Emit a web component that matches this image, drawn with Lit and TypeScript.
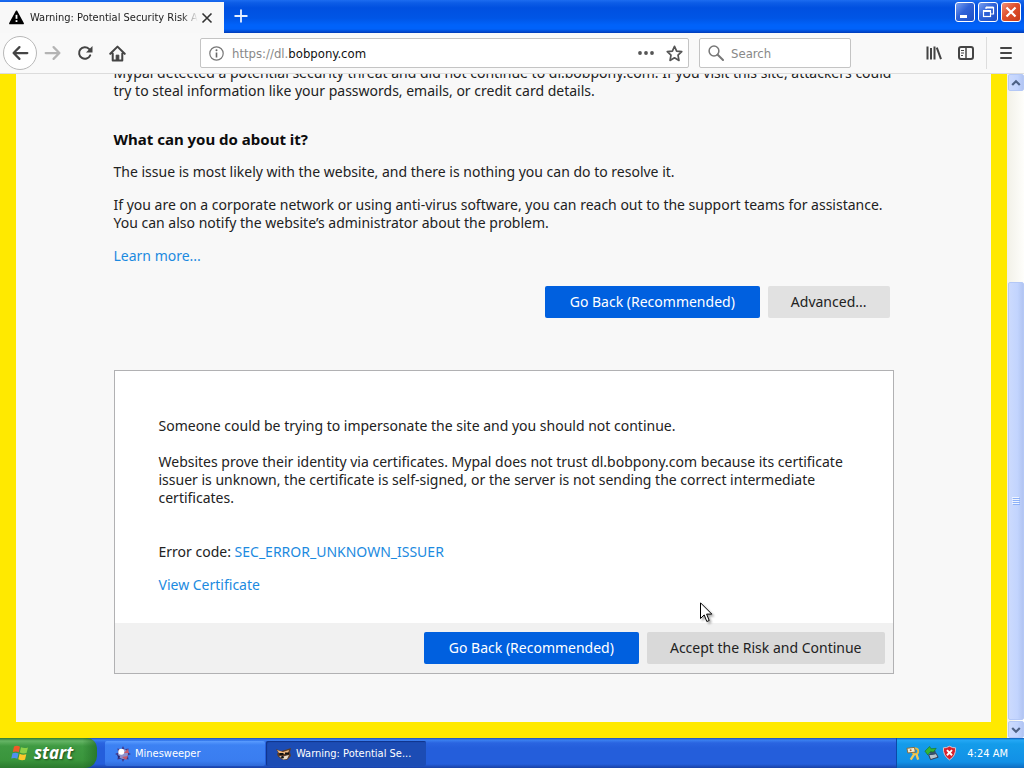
import { LitElement, html, css, svg } from "lit";
import { customElement } from "lit/decorators.js";

const arrow = svg`<path d="M14.5 8H2.5M7.5 2.8L2.3 8l5.2 5.2" fill="none" stroke="currentColor" stroke-width="2" stroke-linecap="round" stroke-linejoin="round"/>`;

@customElement("title-bar")
class TitleBar extends LitElement {
  static styles = css`
    :host { display: flex; height: 33px; flex: none; padding-top: 2px; box-sizing: border-box;
      background: linear-gradient(#1c6cf0 0, #0c5ce6 3px, #0050e0 8px, #0055e5 18px, #0062fa 25px, #0062fa 29px, #003bb8 33px); }
    .tab { display: flex; align-items: center; width: 224px; height: 31px; box-sizing: border-box;
      padding: 0 8px 0 9px; background: #f8f8f8; font-size: 11px; color: #222; }
    .label { flex: 1; margin: 0 0 0 6px; overflow: hidden; white-space: nowrap;
      mask-image: linear-gradient(to right, #000 90%, transparent 100%); }
    button { border: 0; padding: 0; background: none; display: grid; place-items: center; }
    .new { width: 34px; height: 28px; }
    .controls { display: flex; gap: 3px; margin-left: auto; padding-right: 3px; }
    .win { width: 20px; height: 20px; border: 1px solid #fff; border-radius: 3px; box-sizing: border-box;
      background: linear-gradient(135deg, #7aa0f0, #2f62d8 45%, #1d4fc4); }
    .close { background: linear-gradient(135deg, #f09078, #e0502c 45%, #c83a18); }
  `;
  render() {
    return html`
      <div class="tab">
        <svg width="15" height="15" viewBox="0 0 15 15"><path d="M7.5 1.4L14 13.4H1z" stroke="#000" stroke-width="1.8" stroke-linejoin="round"/><path d="M7.5 4.8v4" stroke="#fff" stroke-width="1.8"/><rect x="6.6" y="10.2" width="1.8" height="1.8" fill="#fff"/></svg>
        <span class="label">Warning: Potential Security Risk A</span>
        <button aria-label="Close tab"><svg width="18" height="18" viewBox="0 0 18 18"><path d="M4.5 4.5l9 9M13.5 4.5l-9 9" stroke="#333" stroke-width="1.6"/></svg></button>
      </div>
      <button class="new" aria-label="New tab"><svg width="16" height="16" viewBox="0 0 16 16"><path d="M8 1.5v13M1.5 8h13" stroke="#e8f0ff" stroke-width="1.8"/></svg></button>
      <div class="controls">
        <button class="win" aria-label="Minimize"><svg width="18" height="18" viewBox="0 0 18 18"><path d="M4 13.5h7" stroke="#fff" stroke-width="3"/></svg></button>
        <button class="win" aria-label="Restore"><svg width="18" height="18" viewBox="0 0 18 18" fill="none" stroke="#fff"><path d="M7 6V4.500h7.500v6.500H12" stroke-width="1.2"/><path d="M7 4.500h7.500" stroke-width="2"/><rect x="4.500" y="8" width="7" height="5.500" stroke-width="1.2"/><path d="M4 8h8" stroke-width="2"/></svg></button>
        <button class="win close" aria-label="Close"><svg width="18" height="18" viewBox="0 0 18 18"><path d="M4.500 4.500l9 9M13.500 4.500l-9 9" stroke="#fff" stroke-width="2.200"/></svg></button>
      </div>`;
  }
}

@customElement("nav-bar")
class NavBar extends LitElement {
  static styles = css`
    :host { display: flex; align-items: center; height: 41px; flex: none; box-sizing: border-box;
      background: #f9f9f9; border-bottom: 1px solid #dcdcdc; color: #444; padding-left: 3px; }
    button { border: 0; padding: 0; background: none; color: inherit; display: grid; place-items: center; width: 32px; height: 32px; }
    .back { width: 34px; height: 34px; box-sizing: border-box; border: 1px solid #b8b8b8; border-radius: 50%; background: #fff; }
    .off { color: #b4b4b4; }
    .box { display: flex; align-items: center; height: 30px; box-sizing: border-box; border: 1px solid #c4c4c4;
      border-radius: 2px; background: #fff; font-size: 13px; color: #888; }
    .url { flex: 1; margin-left: 67px; padding-left: 8px; }
    .url svg { margin-right: 8px; }
    .url button { width: 28px; height: 28px; color: #555; }
    .url button svg { margin: 0; }
    .search { width: 152px; margin-left: 10px; padding-left: 8px; }
    input { flex: 1; min-width: 0; width: 0; border: 0; padding: 0; background: none; font: inherit; color: #111; outline: 0; }
    .search input { margin-left: 7px; }
    input::placeholder { color: #888; opacity: 1; }
    .tools { display: flex; align-items: center; margin-left: 67px; }
    .menu { width: 38px; border-left: 1px solid #ddd; margin-left: 4px; }
  `;
  render() {
    return html`
      <button class="back" aria-label="Back"><svg width="18" height="18" viewBox="0 0 16 16">${arrow}</svg></button>
      <button class="off" aria-label="Forward"><svg width="18" height="18" viewBox="0 0 16 16"><g transform="matrix(-1 0 0 1 16 0)">${arrow}</g></svg></button>
      <button aria-label="Reload"><svg width="16" height="16" viewBox="0 0 16 16"><path d="M13.200 10.400A5.800 5.800 0 1 1 12 3.900l1.200 1.300" fill="none" stroke="currentColor" stroke-width="2" stroke-linecap="round"/><path d="M15.500 1v6.500H9z" fill="currentColor"/></svg></button>
      <button aria-label="Home"><svg width="17" height="17" viewBox="0 0 16 16"><path d="M1.200 8.300L8 1.500l6.800 6.800M3.500 8v6.500h9V8" fill="none" stroke="currentColor" stroke-width="1.900" stroke-linecap="round" stroke-linejoin="round"/><path d="M6.700 14.500V9.500h2.600v5z" fill="currentColor" stroke="currentColor" stroke-width=".8"/></svg></button>
      <label class="box url">
        <svg width="15" height="15" viewBox="0 0 15 15"><circle cx="7.500" cy="7.500" r="6.700" fill="none" stroke="#777" stroke-width="1.200"/><path d="M7.500 6.500v5" stroke="#666" stroke-width="1.600"/><circle cx="7.500" cy="4.200" r="1" fill="#666"/></svg>
        <span>https://dl.</span><input aria-label="Address" value="bobpony.com">
        <button aria-label="Page actions"><svg width="16" height="16" viewBox="0 0 16 16" fill="currentColor"><circle cx="2" cy="8" r="1.900"/><circle cx="8" cy="8" r="1.900"/><circle cx="14" cy="8" r="1.900"/></svg></button>
        <button aria-label="Bookmark"><svg width="17" height="17" viewBox="0 0 16 16"><path d="M8 1.300l2 4.400 4.800.6-3.500 3.300.9 4.900L8 12.100l-4.200 2.400.9-4.900L1.200 6.300 6 5.700z" fill="none" stroke="currentColor" stroke-width="1.600" stroke-linejoin="round"/></svg></button>
      </label>
      <label class="box search">
        <svg width="16" height="16" viewBox="0 0 16 16" fill="none" stroke="#777"><circle cx="6" cy="6" r="4.900" stroke-width="1.500"/><path d="M9.700 9.700l5.300 5.300" stroke-width="2" stroke-linecap="round"/></svg>
        <input aria-label="Search" placeholder="Search">
      </label>
      <div class="tools">
        <button aria-label="Library"><svg width="16" height="16" viewBox="0 0 16 16" stroke="currentColor" stroke-width="2" fill="none"><path d="M1.500 1.500v13M5 3v11.500M8.500 1.500v13M10.800 2.600l4.200 11.500"/></svg></button>
        <button aria-label="Sidebars"><svg width="16" height="16" viewBox="0 0 16 16" fill="none" stroke="currentColor"><rect x="1" y="2" width="14" height="12" rx="2" stroke-width="2"/><path d="M8 2v12" stroke-width="1.500"/><path d="M3 5.500h3M3 8h3M3 10.500h2" stroke-width="1"/></svg></button>
        <button class="menu" aria-label="Menu"><svg width="16" height="16" viewBox="0 0 16 16" stroke="currentColor" stroke-width="2" stroke-linecap="round"><path d="M3 3h10M3 8h10M3 13h10"/></svg></button>
      </div>`;
  }
}

@customElement("scroll-bar")
class ScrollBar extends LitElement {
  static styles = css`
    :host { display: flex; flex-direction: column; width: 17px; flex: none; box-sizing: border-box; padding-left: 1px; background: linear-gradient(90deg, #f2f1e8, #fefefb); }
    button, .thumb { border: 1px solid #b4c8f6; border-radius: 2px; padding: 0; background: linear-gradient(90deg, #ccdafd, #c2d4fe 60%, #b2c5f2);
      box-sizing: border-box; display: grid; place-items: center; }
    button { height: 17px; flex: none; }
    .track { flex: 1; display: flex; flex-direction: column; }
    .space { flex: 192; }
    .thumb { flex: 437; margin-bottom: 1px; }
  `;
  render() {
    return html`
      <button aria-label="Scroll up"><svg width="10" height="8" viewBox="0 0 10 8"><path d="M1.200 6L5 2.200 8.800 6" fill="none" stroke="#4d6185" stroke-width="2.200"/></svg></button>
      <div class="track"><div class="space"></div>
        <div class="thumb"><svg width="8" height="8" viewBox="0 0 8 8"><path d="M0 .5h7M0 2.500h7M0 4.500h7M0 6.500h7" stroke="#eef4fe"/><path d="M1 1.500h7M1 3.500h7M1 5.500h7M1 7.500h7" stroke="#8cb0f8"/></svg></div>
      </div>
      <button aria-label="Scroll down"><svg width="10" height="8" viewBox="0 0 10 8"><path d="M1.200 2L5 5.800 8.800 2" fill="none" stroke="#4d6185" stroke-width="2.200"/></svg></button>`;
  }
}

@customElement("warning-page")
class WarningPage extends LitElement {
  static styles = css`
    :host { display: flex; flex-direction: column; flex: 1; min-width: 0; padding: 0 16px 16px; background: #ffe900; }
    .panel { flex: 1; min-height: 0; display: flex; flex-direction: column; justify-content: flex-end; align-items: center;
      overflow: hidden; padding-bottom: 48px; background: #f8f8f8; }
    main { width: 780px; max-width: 100%; font: 14px/18px "Noto Sans", sans-serif; color: #222; }
    p, h2 { margin: 0 0 15px; }
    h2 { margin-top: 30px; font-size: 15px; line-height: 18px; color: #0c0c0d; }
    a { color: #1c8ae0; text-decoration: none; }
    .actions { display: flex; justify-content: flex-end; gap: 8px; }
    .top { margin: 21px 4px 52px 0; }
    button { height: 32px; padding: 0 22px; border: 1px solid transparent; border-radius: 2px; font: inherit; white-space: nowrap; color: #222; background: #e1e1e1; }
    .primary { padding: 0 24px; background: #0060df; color: #fff; }
    .card { border: 1px solid #b1b1b3; background: #fff; }
    .body { padding: 46px 44px 29px; }
    .body p { margin-bottom: 18px; }
    .body .code { margin: 36px 0 15px; }
    .body .last { margin: 0; }
    .foot { padding: 9px 8px; background: #f1f1f1; }
    .foot .plain { background: #d9d9d9; }
  `;
  render() {
    return html`<div class="panel"><main>
      <p>Mypal detected a potential security threat and did not continue to dl.bobpony.com. If you visit this site, attackers could<br>try to steal information like your passwords, emails, or credit card details.</p>
      <h2>What can you do about it?</h2>
      <p>The issue is most likely with the website, and there is nothing you can do to resolve it.</p>
      <p>If you are on a corporate network or using anti-virus software, you can reach out to the support teams for assistance.<br>You can also notify the website’s administrator about the problem.</p>
      <a href="#more">Learn more...</a>
      <div class="actions top"><button class="primary">Go Back (Recommended)</button><button>Advanced...</button></div>
      <section class="card">
        <div class="body">
          <p>Someone could be trying to impersonate the site and you should not continue.</p>
          <p>Websites prove their identity via certificates. Mypal does not trust dl.bobpony.com because its certificate<br>issuer is unknown, the certificate is self-signed, or the server is not sending the correct intermediate<br>certificates.</p>
          <p class="code">Error code: <a href="#code">SEC_ERROR_UNKNOWN_ISSUER</a></p>
          <p class="last"><a href="#cert">View Certificate</a></p>
        </div>
        <div class="actions foot"><button class="primary">Go Back (Recommended)</button><button class="plain">Accept the Risk and Continue</button></div>
      </section>
    </main></div>`;
  }
}

@customElement("task-bar")
class TaskBar extends LitElement {
  static styles = css`
    :host { display: flex; height: 30px; flex: none; align-items: stretch; color: #fff; font-size: 11px;
      background: linear-gradient(#1f50b8 0, #3a80f0 2px, #2a64e0 5px, #245edb 10px, #245edb 26px, #1941a5 30px); }
    button { border: 0; color: inherit; font: inherit; display: flex; align-items: center; }
    .start { width: 97px; padding: 0 0 0 11px; gap: 5px; border-radius: 0 10px 12px 0; margin-right: 8px;
      font: italic bold 17px/28px "Noto Sans", sans-serif; text-shadow: 1px 1px 2px #1b4a1b;
      background: linear-gradient(90deg, transparent 85%, #1f6a24aa), linear-gradient(#2f7a35 0, #65b565 3px, #3f9a42 8px, #3a953c 22px, #2b7a2e 30px); }
    .task { width: 160px; box-sizing: border-box; padding: 0 10px; gap: 4px; margin: 3px 1px 2px 0; border-radius: 2px;
      background: linear-gradient(#5a9cff, #3c81f3 4px, #3a7df0 20px, #2f6ad8); }
    .on { background: #1c4cb4; box-shadow: inset 1px 1px 1px #10348a; }
    .tray { display: flex; align-items: center; gap: 3px; margin-left: auto; width: 128px; box-sizing: border-box; padding: 0 16px 0 9px;
      border-left: 1px solid #0b4aa8; background: linear-gradient(#0c59b9 0, #24a8f5 2px, #149cea 6px, #1290e6 24px, #0e6cc0 30px); }
    time { margin-left: auto; white-space: nowrap; }
  `;
  render() {
    return html`
      <button class="start"><svg width="18" height="18" viewBox="0 0 18 18"><path d="M3 2.500q3-1.500 6 .3L7.800 8.200Q5 6.800 1.800 8z" fill="#f05a28"/><path d="M10 3.200q3.200 1.500 7 .3L15.500 9q-3.500 1-6.700-.6z" fill="#8cd048"/><path d="M1.500 9.200q3-1.200 6 .2L6.300 14.800Q3.500 13.400.3 14.500z" fill="#5090f0"/><path d="M8.600 9.800q3.200 1.500 6.700.5L14 15.800q-3.500 1-6.700-.6z" fill="#fcc82c"/></svg>start</button>
      <button class="task"><svg width="16" height="16" viewBox="0 0 16 16"><path d="M8 0l1.600 3.200L13.600 2.400 12.800 6.400 16 8l-3.200 1.600.8 4-4-.8L8 16l-1.600-3.200-4 .8.8-4L0 8l3.200-1.600-.8-4 4 .8z" fill="#403888"/><circle cx="8" cy="8" r="5" fill="#8c90cc"/><circle cx="6.300" cy="5.800" r="3" fill="#fff"/><path d="M9 7l4-4 1 4zM7 11l6-1-2 4z" fill="#c85868"/><path d="M2 9l3 1-1 3z" fill="#28246c"/></svg>Minesweeper</button>
      <button class="task on"><svg width="16" height="16" viewBox="0 0 16 16"><path d="M0 3l5 2 4-1 6-2-1 4 1 4-4 4-5-.5-4-3-1-2.500 1-1.500z" fill="#5c3c28"/><path d="M1 4l6 2 6-2-1 3-4 1-5-1z" fill="#f0b880"/><path d="M3.500 8h4M9 7.500h4" stroke="#111" stroke-width="2"/><path d="M3 10l4 .5 6-1.500-2 4-4 .5z" fill="#e9dccb"/><circle cx="6.500" cy="11.300" r="1.300" fill="#111"/></svg>Warning: Potential Se...</button>
      <div class="tray">
        <svg width="15" height="16" viewBox="0 0 16 16"><circle cx="10" cy="6" r="3" fill="none" stroke="#e8b840" stroke-width="2"/><path d="M9 9l-4 6M11 9l2 6" stroke="#f0c858" stroke-width="2.500"/><path d="M1 3l8-1 1 5-8 1z" fill="#f4ecd0" stroke="#8a6a38"/><circle cx="5" cy="5" r="1" fill="#b06030"/></svg>
        <svg width="15" height="16" viewBox="0 0 16 16"><path d="M5 10l8-1.500 2 4-8 2.500z" fill="#b8c4cc" stroke="#334"/><path d="M6 6l6-1 1 4-6 1z" fill="#38506c"/><path d="M1 6l5-5 1.500 2.500L13 3l-3 4-3-.5L4 10z" fill="#35b535" stroke="#187018" stroke-width=".6"/></svg>
        <svg width="15" height="16" viewBox="0 0 16 16"><path d="M8 .8q3.500 2 6.500 1.700Q15 11 8 15.300 1 11 1.500 2.500 4.500 2.800 8 .8z" fill="#d8202c" stroke="#e8c8cc"/><path d="M5.300 5l5.400 5.400M10.700 5L5.300 10.400" stroke="#fff" stroke-width="2"/></svg>
        <time>4:24 AM</time>
      </div>`;
  }
}

@customElement("app-root")
class AppRoot extends LitElement {
  static styles = css`
    :host { --ui: "DejaVu Sans Condensed", "Noto Sans", sans-serif; display: flex; flex-direction: column; height: 100vh; position: relative; overflow: hidden;
      font-family: var(--ui); }
    .view { flex: 1; display: flex; min-height: 0; }
    .cursor { position: absolute; left: 700px; top: 602px; filter: drop-shadow(2px 2px 1px #0005); }
  `;
  render() {
    return html`<title-bar></title-bar><nav-bar></nav-bar>
      <div class="view"><warning-page></warning-page><scroll-bar></scroll-bar></div>
      <task-bar></task-bar>
      <svg class="cursor" width="13" height="21" viewBox="0 0 13 21"><path d="M.5.800v15.700l3.700-3.600 2.600 6.600 2.400-1-2.600-6.400h5.200z" fill="#fff" stroke="#000"/></svg>`;
  }
}
